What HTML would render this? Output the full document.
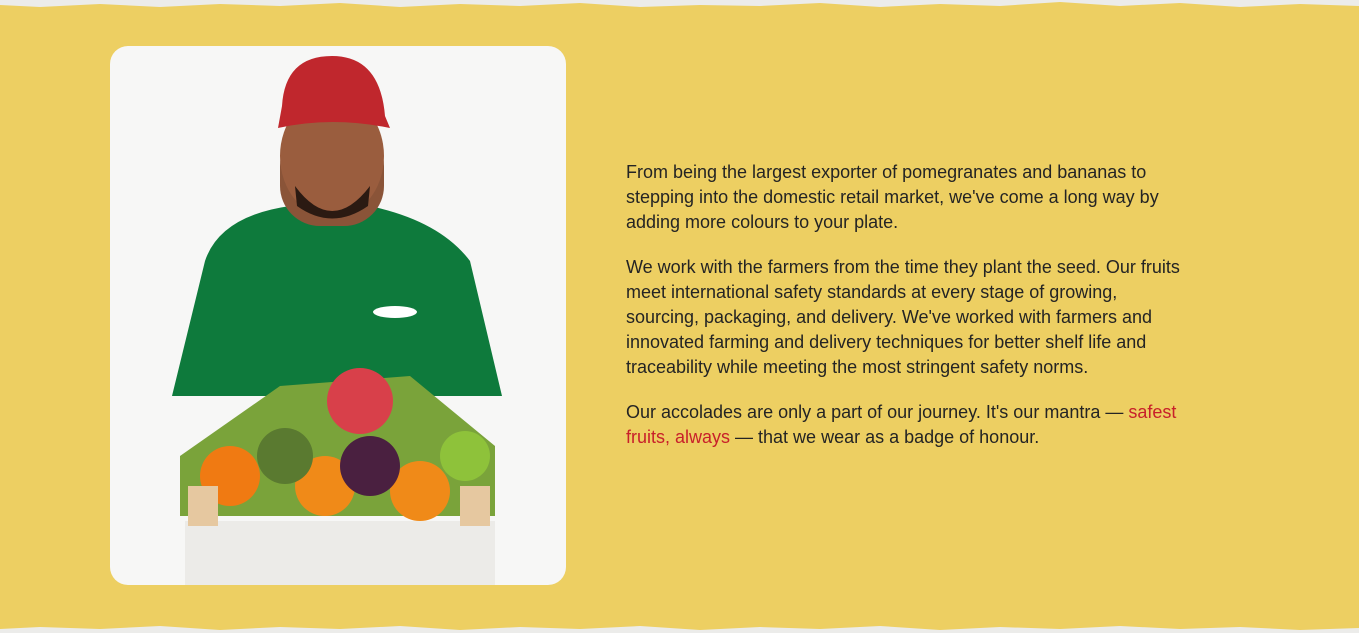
<!DOCTYPE html>
<html><head><meta charset="utf-8"><style>
html,body{margin:0;padding:0}
body{width:1359px;height:633px;overflow:hidden;background:#edcf62;position:relative;font-family:"Liberation Sans",sans-serif}
.top{position:absolute;left:0;top:0;width:1359px;height:10px}
.bot{position:absolute;left:0;bottom:0;width:1359px;height:9px}
.card{position:absolute;left:110px;top:46px;width:456px;height:539px;background:#f7f7f6;border-radius:18px;overflow:hidden}
.txt{position:absolute;left:626px;top:160px;width:562px;font-size:18px;line-height:25px;color:#242424}
.txt p{margin:0 0 20px}
.red{color:#c8202a}
</style></head><body>
<svg class="top" viewBox="0 0 1359 10" preserveAspectRatio="none"><path d="M0 0H1359V6L1300 4 1240 7 1180 3 1120 6 1060 2 1000 6 940 4 880 7 820 3 760 6 700 5 640 7 580 3 520 6 460 4 400 7 340 3 280 6 220 4 160 7 100 4 40 7 0 5Z" fill="#ececea"/></svg>
<svg class="bot" viewBox="0 0 1359 9" preserveAspectRatio="none"><path d="M0 9H1359V4L1300 6 1240 3 1180 5 1120 2 1060 5 1000 3 940 6 880 2 820 5 760 3 700 6 640 2 580 5 520 3 460 6 400 2 340 5 280 3 220 6 160 2 100 5 40 3 0 5Z" fill="#ececea"/></svg>
<div class="card">
<svg width="456" height="539" viewBox="0 0 456 539">
<path d="M62 350 L95 215 Q110 170 180 160 L200 165 L240 165 L260 160 Q330 175 360 215 L392 350 Z" fill="#0e7a3c"/>
<rect x="170" y="80" width="104" height="100" rx="40" fill="#8a5438"/>
<ellipse cx="222" cy="110" rx="52" ry="62" fill="#9a5d3e"/>
<path d="M172 60 Q175 10 222 10 Q270 10 275 70 L280 82 Q222 70 168 82Z" fill="#c0272d"/>
<path d="M185 140 Q222 190 260 140 L258 160 Q222 185 187 160Z" fill="#2b1a12"/>
<ellipse cx="285" cy="266" rx="22" ry="6" fill="#fff"/>
<path d="M70 410 L170 340 L300 330 L385 400 L385 470 L70 470Z" fill="#7aa33a"/>
<circle cx="120" cy="430" r="30" fill="#f07a12"/>
<circle cx="215" cy="440" r="30" fill="#f08a18"/>
<circle cx="310" cy="445" r="30" fill="#f08a18"/>
<circle cx="250" cy="355" r="33" fill="#d8404a"/>
<circle cx="260" cy="420" r="30" fill="#4a2040"/>
<circle cx="175" cy="410" r="28" fill="#5a7a30"/>
<circle cx="355" cy="410" r="25" fill="#8ec23a"/>
<path d="M75 475 H385 V539 H75Z" fill="#ecebe8"/>
<rect x="78" y="440" width="30" height="40" fill="#e6c8a0"/>
<rect x="350" y="440" width="30" height="40" fill="#e6c8a0"/>
</svg>
</div>
<div class="txt">
<p>From being the largest exporter of pomegranates and bananas to stepping into the domestic retail market, we've come a long way by adding more colours to your plate.</p>
<p>We work with the farmers from the time they plant the seed. Our fruits meet international safety standards at every stage of growing, sourcing, packaging, and delivery. We've worked with farmers and innovated farming and delivery techniques for better shelf life and traceability while meeting the most stringent safety norms.</p>
<p>Our accolades are only a part of our journey. It's our mantra — <span class="red">safest fruits, always</span> — that we wear as a badge of honour.</p>
</div>
</body></html>
